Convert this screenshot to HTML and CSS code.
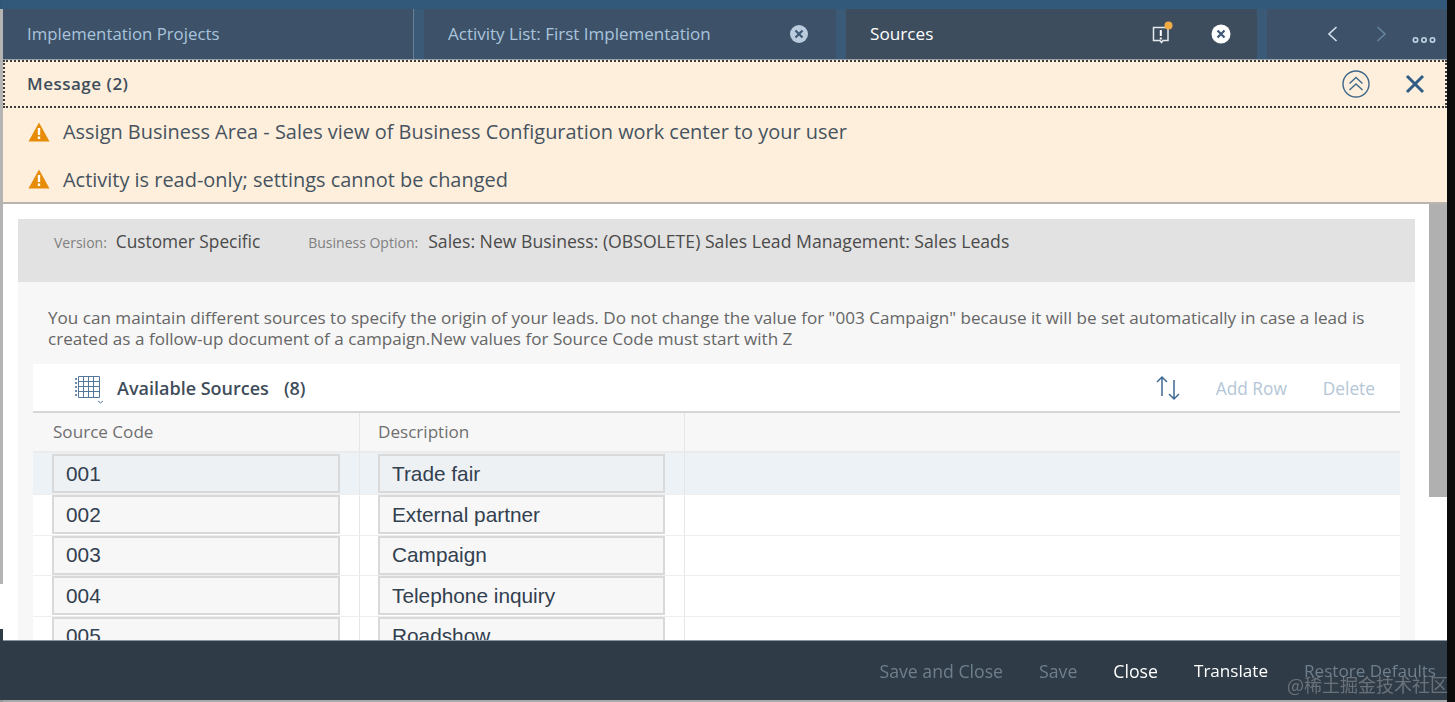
FILE: index.html
```html
<!DOCTYPE html>
<html lang="en">
<head>
<meta charset="utf-8">
<title>Sources</title>
<link rel="stylesheet" href="styles.css">
</head>
<body>
<div class="screen">
  <div class="rail"></div>
  <div class="main">
    <div class="topbar"></div>
    <nav class="tabs">
      <div class="tab tab-first"><span class="tab-label">Implementation Projects</span></div>
      <div class="tab-gap"></div>
      <div class="tab tab-mid"><span class="tab-label">Activity List: First Implementation</span>
        <svg class="tab-close" width="20" height="20" viewBox="0 0 20 20"><circle cx="10" cy="10" r="9" fill="#b9cbdc"/><path d="M6.500 6.500l7 7M13.500 6.500l-7 7" stroke="#3f5a74" stroke-width="2.200"/></svg>
      </div>
      <div class="tab-gap"></div>
      <div class="tab tab-active"><span class="tab-label">Sources</span>
        <span class="tab-tools">
          <svg class="tab-msg" width="24" height="24" viewBox="0 0 24 24"><path d="M4.500 6.500h14.500v13h-5l-1.500 2-1.500-2h-6.500z" fill="none" stroke="#e4e9ee" stroke-width="1.500"/><path d="M11.800 9v6M11.800 16.500v2" stroke="#fff" stroke-width="2"/><circle cx="19.500" cy="4.500" r="4" fill="#f0ab45"/></svg>
          <svg width="20" height="20" viewBox="0 0 20 20"><circle cx="10" cy="10" r="9.500" fill="#fff"/><path d="M6.500 6.500l7 7M13.500 6.500l-7 7" stroke="#3f5a74" stroke-width="2.200"/></svg>
        </span>
      </div>
      <div class="tab-gap"></div>
      <div class="tab-nav">
        <svg width="14" height="18" viewBox="0 0 14 18"><path d="M10.500 2L3 9l7.500 7" fill="none" stroke="#d5e2ee" stroke-width="1.600"/></svg>
        <svg width="14" height="18" viewBox="0 0 14 18"><path d="M3.500 2L11 9l-7.500 7" fill="none" stroke="#64849f" stroke-width="1.600"/></svg>
        <svg class="tab-more" width="24" height="8" viewBox="0 0 24 8"><g fill="none" stroke="#c4d6e6" stroke-width="1.600"><circle cx="3.500" cy="4" r="2.200"/><circle cx="12" cy="4" r="2.200"/><circle cx="20.500" cy="4" r="2.200"/></g></svg>
      </div>
    </nav>
    <section class="messages">
      <div class="msg-head">
        <strong class="msg-title">Message (2)</strong>
        <svg class="msg-collapse" width="28" height="28" viewBox="0 0 28 28"><circle cx="14" cy="14" r="13" fill="none" stroke="#40688c" stroke-width="1.400"/><path d="M7.500 13.500L14 7.500l6.500 6M7.500 20L14 14l6.500 6" fill="none" stroke="#40688c" stroke-width="1.400"/></svg>
        <svg class="msg-x" width="20" height="20" viewBox="0 0 20 20"><path d="M2 2l16 16M18 2L2 18" stroke="#2f5b84" stroke-width="3"/></svg>
      </div>
      <div class="msg-row">
        <svg width="22" height="20" viewBox="0 0 22 20"><path d="M11 0.500L21.500 19.500H0.500z" fill="#e78c07"/><path d="M11 6v7M11 14.500v2.500" stroke="#fff" stroke-width="2.400"/></svg>
        <span>Assign Business Area - Sales view of Business Configuration work center to your user</span>
      </div>
      <div class="msg-row">
        <svg width="22" height="20" viewBox="0 0 22 20"><path d="M11 0.500L21.500 19.500H0.500z" fill="#e78c07"/><path d="M11 6v7M11 14.500v2.500" stroke="#fff" stroke-width="2.400"/></svg>
        <span>Activity is read-only; settings cannot be changed</span>
      </div>
    </section>
    <div class="workspace">
      <div class="scroll-area">
        <div class="panel">
          <div class="info">
            <span class="info-label">Version:</span><span class="info-value info-version">Customer Specific</span>
            <span class="info-label">Business Option:</span><span class="info-value info-option">Sales: New Business: (OBSOLETE) Sales Lead Management: Sales Leads</span>
          </div>
          <p class="intro">You can maintain different sources to specify the origin of your leads. Do not change the value for "003 Campaign" because it will be set automatically in case a lead is created as a follow-up document of a campaign.New values for Source Code must start with Z</p>
          <div class="toolbar">
            <svg class="grid-icon" width="32" height="30" viewBox="0 0 32 30"><g fill="none" stroke="#55779a" stroke-width="1"><path d="M4.500 2.500h21v21h-21zM4.500 7.500h21M4.500 12.500h21M4.500 17.500h21M9.500 2.500v21M14.500 2.500v21M19.500 2.500v21"/></g><path d="M2 4v19" stroke="#6d8cab" stroke-width="2" stroke-dasharray="2 2"/><path d="M24 27l2.500 2 2.500-2" fill="none" stroke="#55779a"/></svg>
            <strong class="toolbar-title">Available Sources</strong>
            <strong class="toolbar-count">(8)</strong>
            <svg class="sort-icon" width="28" height="28" viewBox="0 0 28 28"><path d="M8 22V3M3 8l5-5 5 5M20 6v19M15 20l5 5 5-5" fill="none" stroke="#3f6a93" stroke-width="1.500"/></svg>
            <span class="toolbar-btn">Add Row</span>
            <span class="toolbar-btn">Delete</span>
          </div>
          <div class="table">
            <div class="row row-head">
              <div class="cell">Source Code</div>
              <div class="cell cell-desc">Description</div>
              <div class="cell-rest"></div>
            </div>
            <div class="row row-selected">
              <div class="cell"><div class="field">001</div></div>
              <div class="cell cell-desc"><div class="field">Trade fair</div></div>
              <div class="cell-rest"></div>
            </div>
            <div class="row">
              <div class="cell"><div class="field">002</div></div>
              <div class="cell cell-desc"><div class="field">External partner</div></div>
              <div class="cell-rest"></div>
            </div>
            <div class="row">
              <div class="cell"><div class="field">003</div></div>
              <div class="cell cell-desc"><div class="field">Campaign</div></div>
              <div class="cell-rest"></div>
            </div>
            <div class="row">
              <div class="cell"><div class="field">004</div></div>
              <div class="cell cell-desc"><div class="field">Telephone inquiry</div></div>
              <div class="cell-rest"></div>
            </div>
            <div class="row">
              <div class="cell"><div class="field">005</div></div>
              <div class="cell cell-desc"><div class="field">Roadshow</div></div>
              <div class="cell-rest"></div>
            </div>
          </div>
        </div>
      </div>
      <div class="scrollbar"><div class="scroll-thumb"></div></div>
    </div>
    <footer class="footer">
      <span class="foot-btn foot-off">Save and Close</span>
      <span class="foot-btn foot-off">Save</span>
      <span class="foot-btn">Close</span>
      <span class="foot-btn foot-tight">Translate</span>
      <span class="foot-btn foot-off foot-tight">Restore Defaults</span>
    </footer>
    <div class="bottom-strip"></div>
  </div>
  <div class="edge"></div>
  <div class="watermark">@稀土掘金技术社区</div>
</div>
</body>
</html>
```
FILE: styles.css
```css
* { box-sizing: border-box; }
html, body { margin: 0; padding: 0; height: 702px; overflow: hidden; background: #fff; }
body { font-family: "Open Sans", "Noto Sans", "Liberation Sans", sans-serif; }
.screen { position: relative; display: flex; width: 1455px; height: 702px; overflow: hidden; filter: blur(0.35px); }
.rail { width: 3px; background: linear-gradient(to bottom, #2f5878 0, #2f5878 9px, #b4b4b4 9px, #b4b4b4 584px, #fff 584px, #fff 629px, #2f3b47 629px, #2f3b47 700px, #999 700px); }
.edge { width: 8px; background: #0b0b0b; }
.main { flex: 1; min-width: 0; display: flex; flex-direction: column; height: 702px; }

.topbar { height: 9px; flex: none; background: #33597a; }
.tabs { height: 51px; flex: none; display: flex; background: #3a5a78; border-bottom: 1px solid #9aa3ab; }
.tab { width: 411px; display: flex; align-items: center; padding: 0 24px; background: #3d5269; color: #a9c4dc; font-size: 17px; font-weight: 500; }
.tab-first { font-size: 16.800px; border-right: 1px solid #6b8096; }
.tab-mid { width: 412px; }
.tab-gap { width: 10px; }
.tab-label { flex: 1; padding-bottom: 2px; }
.tab-close { margin-right: 3px; margin-left: 8px; }
.tab-active { background: #3e4d5e; color: #fff; font-size: 17.200px; }
.tab-tools { display: flex; align-items: center; gap: 38px; margin-right: 2px; }
.tab-msg { margin-top: -2px; }
.tab-nav { flex: 1; display: flex; align-items: center; background: #3d5269; padding-left: 59px; gap: 34px; }
.tab-more { margin-top: 12px; margin-left: -10px; }

.messages { height: 144px; flex: none; background: #feefdc; border-bottom: 2px solid #b9b5ae; }
.msg-head { height: 48px; display: flex; align-items: center; padding: 0 20px 0 22px; border: 2px dotted #3c3c3c; }
.msg-title { flex: 1; padding-bottom: 2px; font-size: 17px; font-weight: 600; letter-spacing: .5px; color: #3f4d5b; }
.msg-collapse { margin-right: 35px; }
.msg-row { height: 47.500px; display: flex; align-items: center; padding-left: 25px; gap: 13px; font-size: 19.950px; color: #46535f; }

.workspace { flex: 1; min-height: 0; display: flex; background: #fff; }
.scroll-area { flex: 1; min-width: 0; padding: 15px 15px 0; overflow: hidden; }
.panel { width: 1397px; height: 500px; background: #f7f7f7; }
.scrollbar { width: 18px; }
.scroll-thumb { height: 293px; background: #b0b0b0; }

.info { height: 63px; background: #e2e2e2; padding: 10px 36px; display: flex; align-items: baseline; }
.info-label { font-size: 14px; color: #7f7f7f; margin-right: 9px; }
.info-value { font-size: 17.300px; color: #4a4a4a; }
.info-version { margin-right: 48px; }
.info-option { font-size: 17.650px; margin-left: 1px; }
.intro { margin: 0; padding: 25px 30px 0; height: 82px; font-size: 17.100px; line-height: 21px; color: #666; }

.toolbar { margin: 0 15px; height: 49px; background: #fff; border-bottom: 2px solid #d6d6d6; display: flex; align-items: center; padding-left: 41px; color: #3f4d5b; }
.grid-icon { margin-right: 11px; margin-top: 2px; }
.toolbar-title, .toolbar-count { font-size: 18px; font-weight: 600; }
.toolbar-count { margin-left: 15px; flex: 1; }
.sort-icon { margin-right: 34px; }
.toolbar-btn { font-size: 17.300px; color: #b4c6d8; margin-right: 25px; padding-top: 1px; }
.toolbar-btn + .toolbar-btn { margin-left: 11px; }

.table { margin: 0 15px; display: flex; flex-direction: column; }
.row { height: 40.500px; display: flex; background: #fff; border-bottom: 1px solid #eee; }
.row-head { height: 40px; background: #f7f7f7; border-bottom: 2px solid #ebebeb; font-size: 17.100px; color: #6f6f6f; }
.row-head .cell { padding-bottom: 1px; }
.row-head .cell:first-child { padding-left: 20px; }
.row-selected { height: 42px; background: #edf2f6; }
.cell { width: 327px; padding: 0 19px; border-right: 1px solid #e6e6e6; display: flex; align-items: center; }
.cell-desc { width: 325px; padding-left: 18px; }
.cell-rest { flex: 1; }
.field { width: 288px; height: 39px; padding-left: 12px; display: flex; align-items: center; font-family: "Liberation Sans", Arial, sans-serif; font-size: 20.800px; color: #32404f; background: #f7f7f7; border: 2px solid #d9d9d9; }
.row-selected .field { background: #eef1f4; }

.footer { height: 60px; flex: none; position: relative; background: #2f3b47; border-top: 1px solid #8a949e; display: flex; align-items: center; justify-content: flex-end; gap: 36px; padding-right: 11px; font-size: 17.700px; font-weight: 500; color: #fff; }
.foot-off { color: #6f7f8d; }
.foot-tight { font-size: 17.100px; }
.bottom-strip { height: 2px; flex: none; background: #a9a9a9; }
.watermark { position: absolute; right: 7px; top: 671px; font-family: "Noto Sans CJK SC", sans-serif; font-size: 18px; color: rgba(255,255,255,.28); white-space: nowrap; }
```
